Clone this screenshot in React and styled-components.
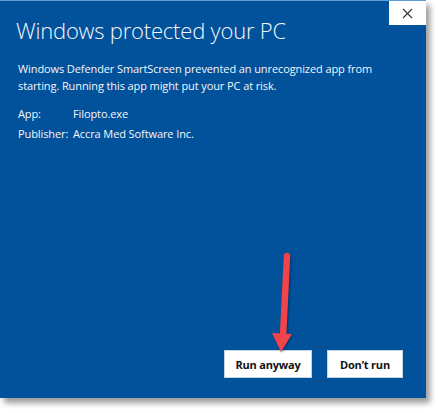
import React from 'react';
import styled, { createGlobalStyle } from 'styled-components';

const Global = createGlobalStyle`
  html, body {
    margin: 0;
    padding: 0;
    background: #ffffff;
  }
  body {
    font-family: 'Open Sans', 'Noto Sans', Arial, sans-serif;
  }
`;

const Page = styled.div`
  width: 440px;
  height: 413px;
  position: relative;
  overflow: hidden;
`;

const Dialog = styled.div`
  width: 426px;
  height: 398px;
  box-sizing: border-box;
  background: #02519b;
  border-top: 1px solid #5b9bd6;
  box-shadow: 4px 5px 6px rgba(0, 0, 0, 0.4);
  display: flex;
  flex-direction: column;
  color: #f4f7fb;
`;

const Header = styled.div`
  display: flex;
  justify-content: space-between;
  align-items: flex-start;
`;

const Title = styled.h1`
  margin: 14px 0 0 16px;
  font-size: 22px;
  font-weight: 300;
  letter-spacing: -0.2px;
  line-height: 30px;
`;

const CloseButton = styled.button`
  width: 37px;
  height: 24px;
  border: none;
  padding: 0;
  background: #ffffff;
  display: flex;
  align-items: center;
  justify-content: center;
  cursor: pointer;
`;

const Body = styled.div`
  padding: 15px 16px 0 18px;
`;

const Message = styled.p`
  margin: 0;
  font-size: 11px;
  line-height: 17px;
  letter-spacing: -0.1px;
`;

const Details = styled.div`
  margin-top: 11px;
  display: grid;
  grid-template-columns: 55px auto;
  row-gap: 3px;
  font-size: 11px;
  line-height: 17px;
  letter-spacing: -0.1px;
`;

const Actions = styled.div`
  margin-top: auto;
  display: flex;
  justify-content: flex-end;
  gap: 15px;
  padding: 0 23px 20px 0;
`;

const Button = styled.button`
  width: ${p => p.w}px;
  height: 28px;
  box-sizing: border-box;
  background: #ffffff;
  border: 1px solid #c8d4e2;
  color: #111111;
  font-family: 'Open Sans', 'Noto Sans', Arial, sans-serif;
  font-size: 11px;
  font-weight: 700;
  letter-spacing: -0.2px;
  padding: 0;
  cursor: pointer;
`;

const Arrow = styled.svg`
  position: absolute;
  left: 266px;
  top: 250px;
  filter: drop-shadow(1px 1px 1px rgba(0, 0, 0, 0.35));
`;

export default function App() {
  return (
    <Page>
      <Global />
      <Dialog>
        <Header>
          <Title>Windows protected your PC</Title>
          <CloseButton aria-label="Close">
            <svg width="11" height="11" viewBox="0 0 11 11">
              <path d="M1 1L10 10M10 1L1 10" stroke="#333" strokeWidth="1.1" fill="none" />
            </svg>
          </CloseButton>
        </Header>
        <Body>
          <Message>
            Windows Defender SmartScreen prevented an unrecognized app from starting. Running this app might put your PC at risk.
          </Message>
          <Details>
            <span>App:</span>
            <span>Filopto.exe</span>
            <span>Publisher:</span>
            <span>Accra Med Software Inc.</span>
          </Details>
        </Body>
        <Actions>
          <Button w={88}>Run anyway</Button>
          <Button w={76}>Don’t run</Button>
        </Actions>
      </Dialog>
      <Arrow width="32" height="106" viewBox="0 0 32 106">
        <path d="M21 6L17 86" stroke="#f2434a" strokeWidth="6.5" strokeLinecap="round" fill="none" />
        <path d="M6 83L26 84L15 102Z" fill="#f2434a" />
      </Arrow>
    </Page>
  );
}
